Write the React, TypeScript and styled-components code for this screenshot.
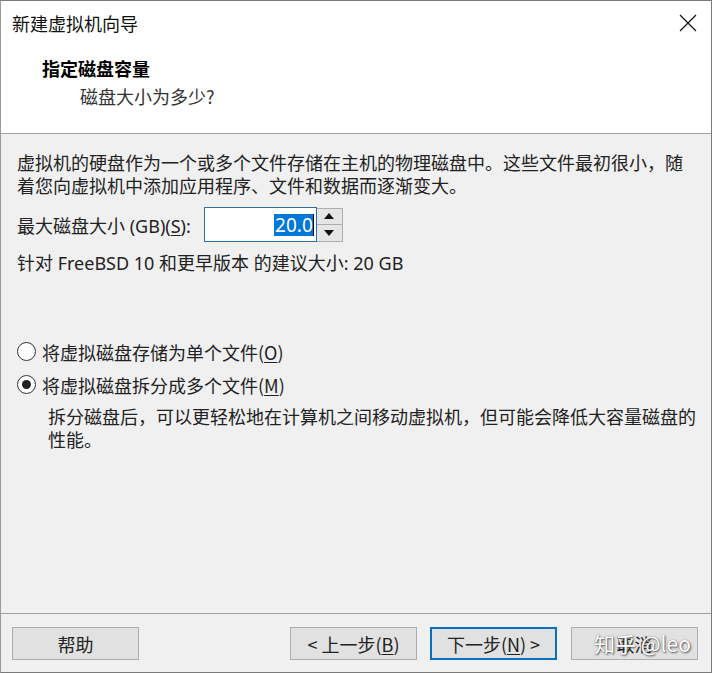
import React from "react";
import styled, { createGlobalStyle } from "styled-components";

const Global = createGlobalStyle`
  html, body { margin: 0; padding: 0; background: #ffffff; }
  body { font-family: "Noto Sans", "Noto Sans CJK SC", sans-serif; }
  * { box-sizing: border-box; }
`;

const Window = styled.div`
  width: 712px;
  height: 673px;
  display: flex;
  flex-direction: column;
  border: 1px solid #7a7a7a;
  border-left-color: #9a9a9a;
  background: #f0f0f0;
  font-size: 18px;
  color: #1a1a1a;
`;

const TitleBar = styled.div`
  height: 43px;
  background: #ffffff;
  display: flex;
  align-items: center;
  justify-content: space-between;
  padding: 0 14px 0 11px;
  font-family: "Noto Sans CJK SC", sans-serif;
  font-size: 18px;
  color: #111;
`;

const Header = styled.div`
  height: 90px;
  background: #ffffff;
  border-bottom: 1px solid #a0a0a0;
  padding: 12px 0 0 41px;
  display: flex;
  flex-direction: column;
`;

const HeaderTitle = styled.div`
  font-family: "Noto Sans CJK SC", sans-serif;
  font-weight: 700;
  font-size: 18px;
  line-height: 24px;
  color: #000;
`;

const HeaderSub = styled.div`
  font-family: "Noto Sans CJK SC", sans-serif;
  font-size: 18px;
  line-height: 24px;
  margin-top: 4px;
  padding-left: 38px;
  color: #333;
`;

const Body = styled.div`
  flex: 1;
  padding: 17px 14px 0 16px;
  display: flex;
  flex-direction: column;
`;

const Para = styled.p<{ $indent?: number }>`
  margin: 0;
  padding-left: ${(p) => p.$indent ?? 0}px;
  line-height: 23px;
  font-family: "Noto Sans CJK SC", sans-serif;
  color: #222;
`;

const SizeRow = styled.div`
  display: flex;
  align-items: center;
  margin-top: 10px;
  height: 35px;
`;

const Label = styled.span`
  font-family: "Noto Sans", "Noto Sans CJK SC", sans-serif;
  color: #222;
  margin-right: 13px;
`;

const U = styled.span`
  text-decoration: underline;
  text-underline-offset: 2px;
`;

const Input = styled.div`
  width: 113px;
  height: 35px;
  background: #fff;
  border: 1px solid #2f6f9e;
  display: flex;
  align-items: center;
  justify-content: flex-end;
  padding-right: 2px;
`;

const Selected = styled.span`
  background: #0078d7;
  color: #fff;
  font-family: "Noto Sans", sans-serif;
  font-size: 19px;
  line-height: 22px;
  padding: 0 0 0 1px;
  border-right: 1px solid #000;
`;

const Spinner = styled.div`
  width: 26px;
  height: 34px;
  display: flex;
  flex-direction: column;
  border: 1px solid #adadad;
  border-left: none;
`;

const SpinBtn = styled.div`
  flex: 1;
  background: #e5e5e5;
  display: flex;
  align-items: center;
  justify-content: center;
  & + & { border-top: 1px solid #adadad; }
`;

const Recommend = styled.div`
  margin-top: 10px;
  line-height: 23px;
  font-family: "Noto Sans", "Noto Sans CJK SC", sans-serif;
  color: #222;
`;

const RadioRow = styled.div<{ $top: number }>`
  display: flex;
  align-items: center;
  margin-top: ${(p) => p.$top}px;
  height: 23px;
  font-family: "Noto Sans CJK SC", sans-serif;
  color: #222;
`;

const RadioCircle = styled.span<{ $checked?: boolean }>`
  width: 19px;
  height: 19px;
  border-radius: 50%;
  border: 1px solid #333;
  background: #fff;
  margin-right: 6px;
  display: flex;
  align-items: center;
  justify-content: center;
  &::after {
    content: "";
    width: 9px;
    height: 9px;
    border-radius: 50%;
    background: #222;
    display: ${(p) => (p.$checked ? "block" : "none")};
  }
`;

const Desc = styled.div`
  margin-top: 9px;
`;

const Footer = styled.div`
  height: 59px;
  border-top: 1px solid #a0a0a0;
  padding: 13px 13px 0 11px;
  display: flex;
  align-items: flex-start;
`;

const Button = styled.div<{ $primary?: boolean; $gap?: number }>`
  position: relative;
  width: 127px;
  height: 33px;
  margin-left: ${(p) => p.$gap ?? 0}px;
  background: #e1e1e1;
  border: ${(p) => (p.$primary ? "2px solid #0a6fc2" : "1px solid #adadad")};
  display: flex;
  align-items: center;
  justify-content: center;
  font-family: "Noto Sans CJK SC", sans-serif;
  font-size: 18px;
  color: #222;
`;

const Spacer = styled.div`
  flex: 1;
`;

const Watermark = styled.span`
  position: absolute;
  left: 22px;
  top: 0px;
  font-family: "Noto Sans CJK SC", "Noto Sans", sans-serif;
  font-size: 21px;
  line-height: 31px;
  color: #ffffff;
  white-space: nowrap;
  text-shadow: 1px 1px 2px #555, 0 0 1px #777;
`;

const CloseIcon = () => (
  <svg width="18" height="18" viewBox="0 0 18 18">
    <path d="M1 1 L17 17 M17 1 L1 17" stroke="#111" strokeWidth="1.2" fill="none" />
  </svg>
);

const Tri = ({ up }: { up?: boolean }) => (
  <svg width="10" height="6" viewBox="0 0 10 6">
    <path d={up ? "M0 6 L5 0 L10 6 Z" : "M0 0 L5 6 L10 0 Z"} fill="#111" />
  </svg>
);

export default function App() {
  return (
    <>
      <Global />
      <Window>
        <TitleBar>
          <span>新建虚拟机向导</span>
          <CloseIcon />
        </TitleBar>
        <Header>
          <HeaderTitle>指定磁盘容量</HeaderTitle>
          <HeaderSub>磁盘大小为多少?</HeaderSub>
        </Header>
        <Body>
          <Para>虚拟机的硬盘作为一个或多个文件存储在主机的物理磁盘中。这些文件最初很小，随</Para>
          <Para>着您向虚拟机中添加应用程序、文件和数据而逐渐变大。</Para>
          <SizeRow>
            <Label>
              最大磁盘大小 (GB)(<U>S</U>):
            </Label>
            <Input>
              <Selected>20.0</Selected>
            </Input>
            <Spinner>
              <SpinBtn>
                <Tri up />
              </SpinBtn>
              <SpinBtn>
                <Tri />
              </SpinBtn>
            </Spinner>
          </SizeRow>
          <Recommend>针对 FreeBSD 10 和更早版本 的建议大小: 20 GB</Recommend>
          <RadioRow $top={65}>
            <RadioCircle />
            <span>
              将虚拟磁盘存储为单个文件(<U>O</U>)
            </span>
          </RadioRow>
          <RadioRow $top={10}>
            <RadioCircle $checked />
            <span>
              将虚拟磁盘拆分成多个文件(<U>M</U>)
            </span>
          </RadioRow>
          <Desc>
            <Para $indent={31}>拆分磁盘后，可以更轻松地在计算机之间移动虚拟机，但可能会降低大容量磁盘的</Para>
            <Para $indent={31}>性能。</Para>
          </Desc>
        </Body>
        <Footer>
          <Button>帮助</Button>
          <Spacer />
          <Button>
            &lt; 上一步(<U>B</U>)
          </Button>
          <Button $primary $gap={13}>
            下一步(<U>N</U>) &gt;
          </Button>
          <Button $gap={14}>
            取消
            <Watermark>知乎 @leo</Watermark>
          </Button>
        </Footer>
      </Window>
    </>
  );
}
